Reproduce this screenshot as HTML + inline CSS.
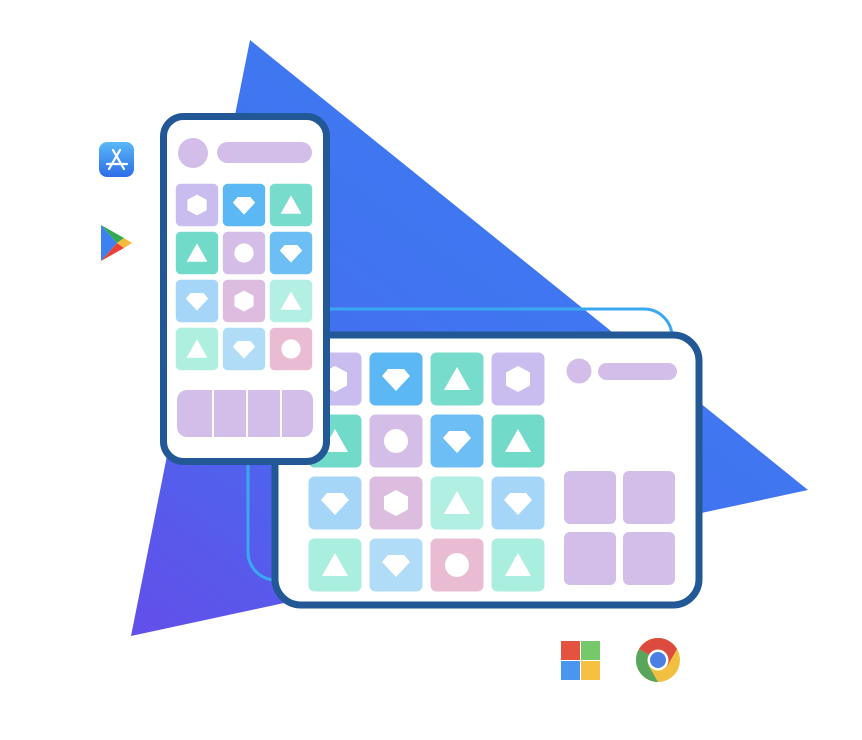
<!DOCTYPE html>
<html><head><meta charset="utf-8"><style>html,body{margin:0;padding:0;background:#fff}svg{display:block}</style></head>
<body>
<svg width="862" height="740" viewBox="0 0 862 740" xmlns="http://www.w3.org/2000/svg">
<defs>
<linearGradient id="tg" x1="0.8" y1="0.1" x2="0.05" y2="1">
<stop offset="0" stop-color="#3b7ff3"/><stop offset="0.55" stop-color="#4370ef"/><stop offset="1" stop-color="#6150ea"/>
</linearGradient>
<path id="tri" d="M0,-12 L13,11 L-13,11Z" fill="#fff"/>
<path id="dia" d="M-8,-10 L8,-10 L14,-3 L0,12 L-14,-3Z" fill="#fff"/>
<path id="hex" d="M0,-13 L12,-6.5 L12,6.5 L0,13 L-12,6.5 L-12,-6.5Z" fill="#fff"/>
<circle id="cir" r="12" fill="#fff"/>
</defs>
<polygon points="250,40 808,490 131,636" fill="url(#tg)"/>
<rect x="248" y="309" width="424" height="271" rx="28" fill="none" stroke="#3aa8f0" stroke-width="3"/>
<rect x="275" y="335" width="424" height="270" rx="26" fill="#fff" stroke="#235896" stroke-width="7"/>
<g>
<g transform="translate(335,379)"><rect x="-26.5" y="-26.5" width="53" height="53" rx="6" fill="#c9bdf0"/><use href="#hex"/></g>
<g transform="translate(396,379)"><rect x="-26.5" y="-26.5" width="53" height="53" rx="6" fill="#5bb8f5"/><use href="#dia"/></g>
<g transform="translate(457,379)"><rect x="-26.5" y="-26.5" width="53" height="53" rx="6" fill="#78dccc"/><use href="#tri"/></g>
<g transform="translate(518,379)"><rect x="-26.5" y="-26.5" width="53" height="53" rx="6" fill="#c9bdf0"/><use href="#hex"/></g>
<g transform="translate(335,441)"><rect x="-26.5" y="-26.5" width="53" height="53" rx="6" fill="#72dac9"/><use href="#tri"/></g>
<g transform="translate(396,441)"><rect x="-26.5" y="-26.5" width="53" height="53" rx="6" fill="#d4bde6"/><use href="#cir"/></g>
<g transform="translate(457,441)"><rect x="-26.5" y="-26.5" width="53" height="53" rx="6" fill="#6cbef5"/><use href="#dia"/></g>
<g transform="translate(518,441)"><rect x="-26.5" y="-26.5" width="53" height="53" rx="6" fill="#72dac9"/><use href="#tri"/></g>
<g transform="translate(335,503)"><rect x="-26.5" y="-26.5" width="53" height="53" rx="6" fill="#a5d6f7"/><use href="#dia"/></g>
<g transform="translate(396,503)"><rect x="-26.5" y="-26.5" width="53" height="53" rx="6" fill="#dcbde0"/><use href="#hex"/></g>
<g transform="translate(457,503)"><rect x="-26.5" y="-26.5" width="53" height="53" rx="6" fill="#b0efe2"/><use href="#tri"/></g>
<g transform="translate(518,503)"><rect x="-26.5" y="-26.5" width="53" height="53" rx="6" fill="#a5d6f7"/><use href="#dia"/></g>
<g transform="translate(335,565)"><rect x="-26.5" y="-26.5" width="53" height="53" rx="6" fill="#aaeedf"/><use href="#tri"/></g>
<g transform="translate(396,565)"><rect x="-26.5" y="-26.5" width="53" height="53" rx="6" fill="#b0dcf7"/><use href="#dia"/></g>
<g transform="translate(457,565)"><rect x="-26.5" y="-26.5" width="53" height="53" rx="6" fill="#e9bcd4"/><use href="#cir"/></g>
<g transform="translate(518,565)"><rect x="-26.5" y="-26.5" width="53" height="53" rx="6" fill="#aaeedf"/><use href="#tri"/></g>
</g>
<circle cx="579" cy="371" r="12.5" fill="#d3bde9"/>
<rect x="598" y="363" width="79" height="17" rx="8.5" fill="#d3bde9"/>
<rect x="564" y="471" width="52" height="53" rx="6" fill="#d3bde9"/>
<rect x="623" y="471" width="52" height="53" rx="6" fill="#d3bde9"/>
<rect x="564" y="532" width="52" height="53" rx="6" fill="#d3bde9"/>
<rect x="623" y="532" width="52" height="53" rx="6" fill="#d3bde9"/>
<rect x="163.5" y="116.5" width="163" height="345" rx="20" fill="#fff" stroke="#235896" stroke-width="7"/>
<circle cx="193" cy="153" r="15" fill="#d3bde9"/>
<rect x="217" y="142" width="95" height="21" rx="10.5" fill="#d3bde9"/>
<g>
<g transform="translate(197,205) scale(0.8)"><rect x="-26.5" y="-26.5" width="53" height="53" rx="6" fill="#c9bdf0"/><use href="#hex"/></g>
<g transform="translate(244,205) scale(0.8)"><rect x="-26.5" y="-26.5" width="53" height="53" rx="6" fill="#5bb8f5"/><use href="#dia"/></g>
<g transform="translate(291,205) scale(0.8)"><rect x="-26.5" y="-26.5" width="53" height="53" rx="6" fill="#78dccc"/><use href="#tri"/></g>
<g transform="translate(197,253) scale(0.8)"><rect x="-26.5" y="-26.5" width="53" height="53" rx="6" fill="#72dac9"/><use href="#tri"/></g>
<g transform="translate(244,253) scale(0.8)"><rect x="-26.5" y="-26.5" width="53" height="53" rx="6" fill="#d4bde6"/><use href="#cir"/></g>
<g transform="translate(291,253) scale(0.8)"><rect x="-26.5" y="-26.5" width="53" height="53" rx="6" fill="#6cbef5"/><use href="#dia"/></g>
<g transform="translate(197,301) scale(0.8)"><rect x="-26.5" y="-26.5" width="53" height="53" rx="6" fill="#a5d6f7"/><use href="#dia"/></g>
<g transform="translate(244,301) scale(0.8)"><rect x="-26.5" y="-26.5" width="53" height="53" rx="6" fill="#dcbde0"/><use href="#hex"/></g>
<g transform="translate(291,301) scale(0.8)"><rect x="-26.5" y="-26.5" width="53" height="53" rx="6" fill="#b3f0e3"/><use href="#tri"/></g>
<g transform="translate(197,349) scale(0.8)"><rect x="-26.5" y="-26.5" width="53" height="53" rx="6" fill="#aeefe0"/><use href="#tri"/></g>
<g transform="translate(244,349) scale(0.8)"><rect x="-26.5" y="-26.5" width="53" height="53" rx="6" fill="#b0dcf7"/><use href="#dia"/></g>
<g transform="translate(291,349) scale(0.8)"><rect x="-26.5" y="-26.5" width="53" height="53" rx="6" fill="#e9bcd4"/><use href="#cir"/></g>
</g>
<rect x="177" y="390" width="136" height="47" rx="10" fill="#d3bde9"/>
<rect x="212" y="390" width="2" height="47" fill="#fff"/>
<rect x="246" y="390" width="2" height="47" fill="#fff"/>
<rect x="280" y="390" width="2" height="47" fill="#fff"/>
<defs><linearGradient id="ag" x1="0" y1="0" x2="0" y2="1"><stop offset="0" stop-color="#5ab8f8"/><stop offset="1" stop-color="#2d6de8"/></linearGradient></defs>
<rect x="99" y="142" width="35" height="35" rx="8" fill="url(#ag)"/>
<g stroke="#fff" stroke-width="2.2" stroke-linecap="round" fill="none">
<path d="M113,150 L124,169"/><path d="M120,150 L109,169"/><path d="M107,164 L127,164"/>
</g>
<path d="M101,225 L117,243 L101,261Z" fill="#3b82f0"/>
<path d="M101,225 L124,238 L117,243Z" fill="#34a853"/>
<path d="M117,243 L124,248 L101,261Z" fill="#ea4335"/>
<path d="M124,238 L132,243 L124,248 L117,243Z" fill="#f6b93b"/>
<rect x="561" y="641" width="19" height="19" fill="#e4533f"/>
<rect x="581" y="641" width="19" height="19" fill="#76c96a"/>
<rect x="561" y="661" width="19" height="19" fill="#4a95ef"/>
<rect x="581" y="661" width="19" height="19" fill="#f4c143"/>
<g transform="translate(658,660)">
<circle r="22" fill="#f2c040"/>
<path d="M0,0 L-19.05,-11 A22,22 0 0 1 19.05,-11Z" fill="#dd4b3e"/>
<path d="M0,0 L-19.05,-11 A22,22 0 0 0 0,22 L0,22Z" fill="#57a65b"/>
<path d="M0,-11 L19.05,-11 L9.5,5.5Z" fill="#dd4b3e"/>
<path d="M-9.5,5.5 L0,22 L4,20 L9.5,5.5Z" fill="#f2c040"/>
<circle r="10.5" fill="#fff"/>
<circle r="8" fill="#4a7fe6"/>
</g>
</svg>
</body></html>
